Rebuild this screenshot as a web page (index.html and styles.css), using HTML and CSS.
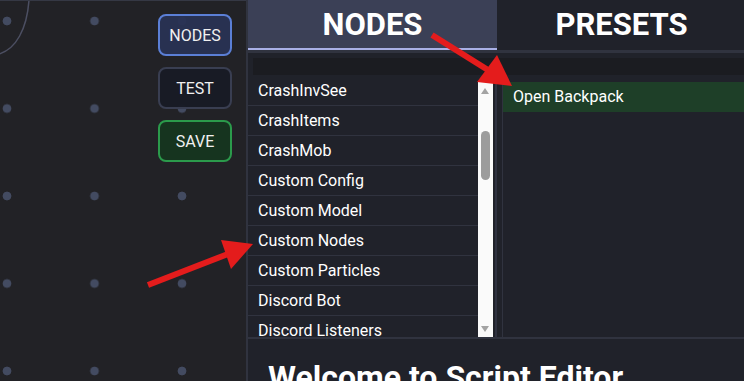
FILE: index.html
```html
<!DOCTYPE html>
<html lang="en">
<head>
    <meta charset="UTF-8">
    <meta name="viewport" content="width=device-width, initial-scale=1.0">
    <title>Script Editor</title>
    <link rel="stylesheet" href="styles.css">
</head>
<body>

    <div class="app">
        <!-- Canvas editor -->
        <div class="canvas">
            <svg class="wire" width="60" height="60" viewBox="0 0 60 60">
                <path d="M29 -1 C 27 28, 16 48, -1 53" fill="none" stroke="#4c4f62" stroke-width="1.5"/>
            </svg>
            <div class="toolbar">
                <button class="tool tool-nodes">NODES</button>
                <button class="tool tool-test">TEST</button>
                <button class="tool tool-save">SAVE</button>
            </div>
        </div>

        <!-- Side panel -->
        <div class="panel">
            <div class="tabs">
                <div class="tab active">NODES</div>
                <div class="tab">PRESETS</div>
            </div>
            <div class="search-row">
                <div class="search"></div>
            </div>
            <div class="lists">
                <div class="node-col">
                    <div class="node-list">
                        <div class="rows">
                            <div class="row">CrashInvSee</div>
                            <div class="row">CrashItems</div>
                            <div class="row">CrashMob</div>
                            <div class="row">Custom Config</div>
                            <div class="row">Custom Model</div>
                            <div class="row">Custom Nodes</div>
                            <div class="row">Custom Particles</div>
                            <div class="row">Discord Bot</div>
                            <div class="row">Discord Listeners</div>
                        </div>
                    </div>
                    <div class="scrollbar">
                        <span class="arrow-up"></span>
                        <span class="thumb"></span>
                        <span class="arrow-down"></span>
                    </div>
                </div>
                <div class="preset-col">
                    <div class="preset selected">Open Backpack</div>
                </div>
            </div>
            <div class="welcome">
                <h1>Welcome to Script Editor</h1>
            </div>
        </div>

        <!-- Annotation arrows -->
        <svg class="marks" width="744" height="381" viewBox="0 0 744 381">
            <line x1="148" y1="285" x2="228" y2="254" stroke="#e41c1c" stroke-width="6"/>
            <polygon points="221,240 253,244 231,269" fill="#e41c1c"/>
            <line x1="432" y1="35" x2="488" y2="70" stroke="#e41c1c" stroke-width="6"/>
            <polygon points="477,82 497,55 512,86" fill="#e41c1c"/>
        </svg>
    </div>

</body>
</html>
```

FILE: styles.css
```css
body {
    margin: 0;
    font-family: Roboto, "Liberation Sans", sans-serif;
    background-color: #222226;
    color: white;
    overflow: hidden;
}
.app {
    position: relative;
    display: flex;
    width: 744px;
    height: 381px;
    overflow: hidden;
}

/* canvas */
.canvas {
    position: relative;
    width: 246px;
    flex-shrink: 0;
    border-top: 1px solid #353844;
    background-color: #222226;
    background-image: radial-gradient(circle, #434b61 4px, transparent 4.7px);
    background-size: 87.5px 87.5px;
    background-position: -36.75px -23.75px;
}
.wire {
    position: absolute;
    left: 0;
    top: 0;
}
.toolbar {
    position: absolute;
    top: 13px;
    right: 14px;
    display: flex;
    flex-direction: column;
    gap: 11px;
}
.tool {
    width: 74px;
    height: 42px;
    border-radius: 8px;
    border: 2px solid;
    font-family: Roboto, "Liberation Sans", sans-serif;
    font-size: 16px;
    color: #f0f0f0;
    padding: 0;
}
.tool-nodes {
    background-color: rgba(40, 50, 84, 0.94);
    border-color: #5b7fd6;
}
.tool-test {
    background-color: rgba(24, 27, 37, 0.97);
    border-color: #393e51;
}
.tool-save {
    background-color: #16341f;
    border-color: #2b9a4b;
}

/* panel */
.panel {
    flex: 1;
    display: flex;
    flex-direction: column;
    min-height: 0;
    background-color: #20222a;
    border-left: 2px solid #30333f;
}
.tabs {
    display: flex;
    flex-shrink: 0;
    gap: 2px;
    height: 50px;
    border-bottom: 3px solid #30333f;
}
.tab {
    flex: 1;
    display: flex;
    align-items: center;
    justify-content: center;
    font-size: 31px;
    font-weight: bold;
    padding-bottom: 2px;
}
.tab.active {
    flex: 0 0 249px;
    background-color: #3b4056;
    border-bottom: 2px solid #a9b0e6;
    padding-bottom: 0;
}
.search-row {
    flex-shrink: 0;
    padding: 5px 0 6px 5px;
}
.search {
    height: 17px;
    background-color: #1b1c21;
}

.lists {
    display: flex;
    flex-shrink: 0;
    height: 256px;
    border-bottom: 2px solid #30333f;
}
.node-col {
    display: flex;
    width: 245px;
    padding-right: 2px;
    border-right: 2px solid #2f3240;
}
.node-list {
    flex: 1;
    overflow: hidden;
}
.rows {
    margin-top: -5px;
}
.row {
    height: 29px;
    line-height: 29px;
    padding-left: 10px;
    font-size: 16px;
    border-bottom: 1px solid #30333f;
    white-space: nowrap;
}
.scrollbar {
    position: relative;
    width: 15px;
    background-color: #fafafa;
}
.arrow-up, .arrow-down {
    position: absolute;
    left: 3px;
    width: 0;
    height: 0;
    border-left: 4.5px solid transparent;
    border-right: 4.5px solid transparent;
}
.arrow-up {
    top: 7px;
    border-bottom: 6px solid #a3a3a3;
}
.arrow-down {
    bottom: 5px;
    border-top: 6px solid #a3a3a3;
}
.thumb {
    position: absolute;
    left: 3px;
    top: 50px;
    width: 9px;
    height: 49px;
    border-radius: 5px;
    background-color: #9c9c9c;
}
.preset-col {
    flex: 1;
    margin-left: 5px;
    border-left: 1px solid #30333f;
    padding-top: 1px;
}
.preset {
    height: 30px;
    line-height: 30px;
    padding-left: 10px;
    font-size: 16px;
}
.preset.selected {
    background-color: #1e3f28;
}

.welcome {
    flex: 1;
    min-height: 0;
    overflow: hidden;
    padding-left: 20px;
}
.welcome h1 {
    margin: 19px 0 0;
    font-size: 32px;
    font-weight: bold;
    white-space: nowrap;
}

.marks {
    position: absolute;
    left: 0;
    top: 0;
    pointer-events: none;
}
```
